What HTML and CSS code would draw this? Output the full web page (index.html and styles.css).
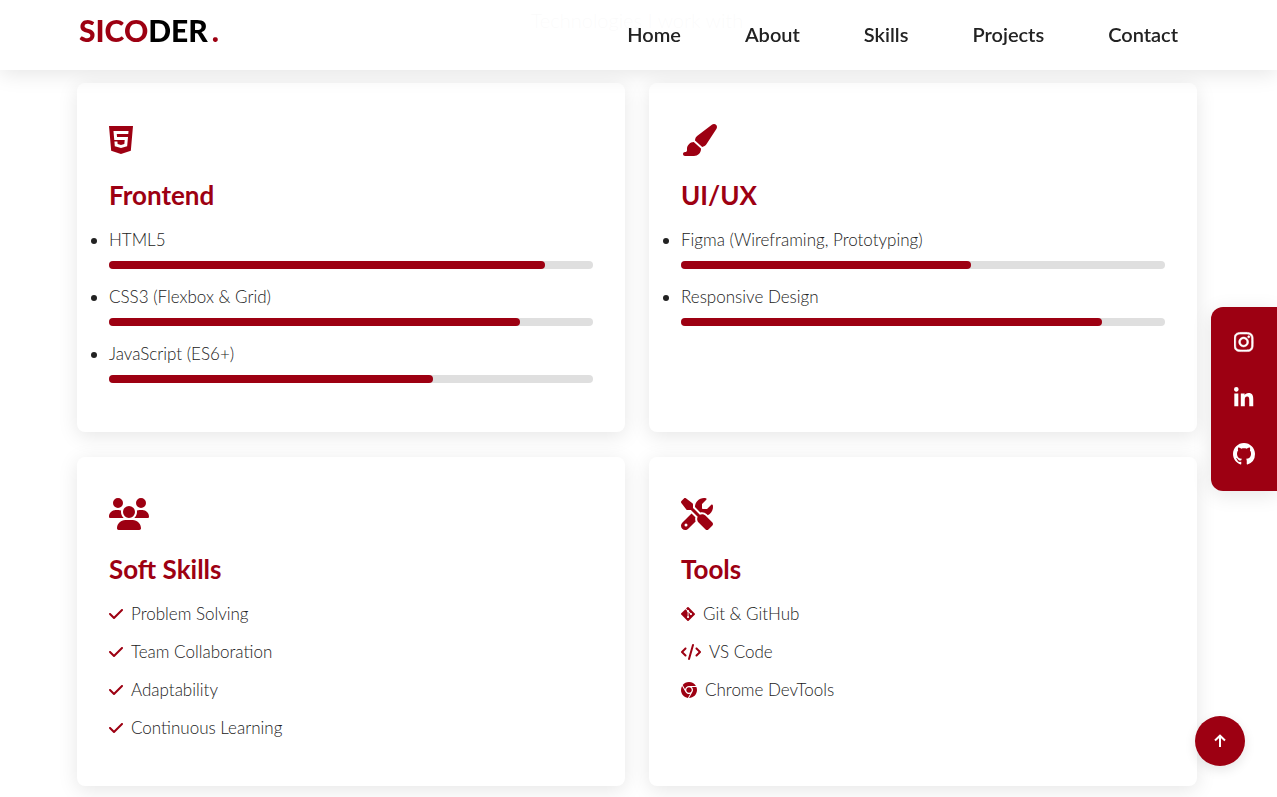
FILE: index.html
```html
<!DOCTYPE html>
<html lang="en">

<head>
    <meta charset="UTF-8">
    <meta name="viewport" content="width=device-width, initial-scale=1.0">
    <title>Sicoder</title>
    <link rel="stylesheet" href="styles.css">
</head>

<body>
    <header class="header">
        <a href="#" class="logo"><span class="logo-red">SICO</span>DER<span class="logo-dot">.</span></a>
        <nav class="navbar">
            <a href="#home">Home</a>
            <a href="#about">About</a>
            <a href="#skills">Skills</a>
            <a href="#projects">Projects</a>
            <a href="#contact">Contact</a>
        </nav>
    </header>

    <section class="skills" id="skills">
        <p class="subtitle">Technologies I work with</p>

        <div class="skills-grid">
            <div class="card">
                <svg class="card-icon" viewBox="0 0 384 512"><path d="M0 32l34.9 395.8L191.5 480l157.6-52.2L384 32H0zm308.2 127.9H124.4l4.1 49.4h175.6l-13.6 148.4-97.9 27v.3h-1.1l-98.7-27.3-6-75.8h47.7L138 320l53.5 14.5 53.7-14.5 6-62.2H84.3L71.5 112.2h241.1l-4.4 47.7z"/></svg>
                <h3>Frontend</h3>
                <ul class="bars">
                    <li>HTML5
                        <div class="bar"><div class="fill" style="width: 90%"></div></div>
                    </li>
                    <li>CSS3 (Flexbox &amp; Grid)
                        <div class="bar"><div class="fill" style="width: 85%"></div></div>
                    </li>
                    <li>JavaScript (ES6+)
                        <div class="bar"><div class="fill" style="width: 67%"></div></div>
                    </li>
                </ul>
            </div>

            <div class="card">
                <svg class="card-icon" viewBox="0 0 576 512"><path d="M339.3 367.1c27.3-3.9 51.9-19.4 67.2-42.9L568.2 74.1c12.6-19.5 9.4-45.3-7.6-61.2S517.7-4.4 499.1 9.6L262.4 187.2c-24 18-38.2 46.1-38.4 76.1L339.3 367.1zm-19.6 25.4l-116-104.4C143.9 290.3 96 339.6 96 400c0 3.9 .2 7.8 .6 11.6C98.4 429.1 86.4 448 68.8 448H64c-17.7 0-32 14.3-32 32s14.3 32 32 32H208c61.9 0 112-50.1 112-112c0-2.5-.1-5-.2-7.5z"/></svg>
                <h3>UI/UX</h3>
                <ul class="bars">
                    <li>Figma (Wireframing, Prototyping)
                        <div class="bar"><div class="fill" style="width: 60%"></div></div>
                    </li>
                    <li>Responsive Design
                        <div class="bar"><div class="fill" style="width: 87%"></div></div>
                    </li>
                </ul>
            </div>

            <div class="card">
                <svg class="card-icon" viewBox="0 0 640 512"><path d="M144 0a80 80 0 1 1 0 160A80 80 0 1 1 144 0zM512 0a80 80 0 1 1 0 160A80 80 0 1 1 512 0zM0 298.7C0 239.8 47.8 192 106.7 192h42.7c15.9 0 31 3.5 44.6 9.7c-1.3 7.2-1.9 14.7-1.9 22.3c0 38.2 16.8 72.5 43.3 96c-.2 0-.4 0-.7 0H21.3C9.6 320 0 310.4 0 298.7zM405.3 320c-.2 0-.4 0-.7 0c26.6-23.5 43.3-57.8 43.3-96c0-7.6-.7-15-1.9-22.3c13.6-6.3 28.7-9.7 44.6-9.7h42.7C592.2 192 640 239.8 640 298.7c0 11.8-9.6 21.3-21.3 21.3H405.3zM224 224a96 96 0 1 1 192 0 96 96 0 1 1 -192 0zM128 485.3C128 411.7 187.7 352 261.3 352H378.7C452.3 352 512 411.7 512 485.3c0 14.7-11.9 26.7-26.7 26.7H154.7c-14.7 0-26.7-11.9-26.7-26.7z"/></svg>
                <h3>Soft Skills</h3>
                <ul class="list">
                    <li><svg viewBox="0 0 448 512"><path d="M438.6 105.4c12.5 12.5 12.5 32.8 0 45.3l-256 256c-12.5 12.5-32.8 12.5-45.3 0l-128-128c-12.5-12.5-12.5-32.8 0-45.3s32.8-12.5 45.3 0L160 338.7 393.4 105.4c12.5-12.5 32.8-12.5 45.3 0z"/></svg>Problem Solving</li>
                    <li><svg viewBox="0 0 448 512"><path d="M438.6 105.4c12.5 12.5 12.5 32.8 0 45.3l-256 256c-12.5 12.5-32.8 12.5-45.3 0l-128-128c-12.5-12.5-12.5-32.8 0-45.3s32.8-12.5 45.3 0L160 338.7 393.4 105.4c12.5-12.5 32.8-12.5 45.3 0z"/></svg>Team Collaboration</li>
                    <li><svg viewBox="0 0 448 512"><path d="M438.6 105.4c12.5 12.5 12.5 32.8 0 45.3l-256 256c-12.5 12.5-32.8 12.5-45.3 0l-128-128c-12.5-12.5-12.5-32.8 0-45.3s32.8-12.5 45.3 0L160 338.7 393.4 105.4c12.5-12.5 32.8-12.5 45.3 0z"/></svg>Adaptability</li>
                    <li><svg viewBox="0 0 448 512"><path d="M438.6 105.4c12.5 12.5 12.5 32.8 0 45.3l-256 256c-12.5 12.5-32.8 12.5-45.3 0l-128-128c-12.5-12.5-12.5-32.8 0-45.3s32.8-12.5 45.3 0L160 338.7 393.4 105.4c12.5-12.5 32.8-12.5 45.3 0z"/></svg>Continuous Learning</li>
                </ul>
            </div>

            <div class="card">
                <svg class="card-icon" viewBox="0 0 512 512"><path fill-rule="evenodd" d="M78.6 5C69.1-2.4 55.6-1.5 47 7L7 47c-8.5 8.5-9.4 22-2.1 31.6l80 104c4.5 5.9 11.6 9.4 19 9.4h54.1l109 109c-14.7 29-10 65.4 14.3 89.6l112 112c12.5 12.5 32.8 12.5 45.3 0l64-64c12.5-12.5 12.5-32.8 0-45.3l-112-112c-24.2-24.2-60.6-29-89.6-14.3l-109-109V104c0-7.5-3.5-14.5-9.4-19L78.6 5zM19.9 396.1C7.2 408.8 0 426.1 0 444.1C0 481.6 30.4 512 67.9 512c18 0 35.3-7.2 48-19.9L233.7 374.3c-7.8-20.9-9-43.6-3.6-65.1l-61.7-61.7L19.9 396.1zM512 144c0-10.5-1.1-20.7-3.2-30.5c-2.4-11.2-16.1-14.1-24.2-6l-63.9 63.9c-3 3-7.1 4.7-11.3 4.7H352c-8.8 0-16-7.2-16-16V102.6c0-4.2 1.7-8.3 4.7-11.3l63.9-63.9c8.1-8.1 5.2-21.8-6-24.2C388.7 1.1 378.5 0 368 0C288.5 0 224 64.5 224 144l0 .8 85.3 85.3c36-9.1 75.8 .5 104 28.7L429 274.5c49-23 83-72.8 83-130.5zM56 432a24 24 0 1 1 48 0 24 24 0 1 1 -48 0z"/></svg>
                <h3>Tools</h3>
                <ul class="list">
                    <li><svg viewBox="0 0 448 512"><path d="M439.55 236.05L244 40.45a28.87 28.87 0 0 0-40.81 0l-40.66 40.63 51.52 51.52c27.06-9.14 52.68 16.77 43.39 43.68l49.66 49.66c34.23-11.8 61.18 31 35.47 56.69-26.49 26.49-70.21-2.87-56-37.34L240.22 199v121.85c25.3 12.54 22.26 41.85 9.08 55a34.34 34.34 0 0 1-48.55 0c-17.57-17.6-11.07-46.91 11.25-56v-123c-20.8-8.51-24.6-30.74-18.64-45L142.57 101 8.45 235.14a28.86 28.86 0 0 0 0 40.81l195.61 195.6a28.86 28.86 0 0 0 40.8 0l194.69-194.69a28.86 28.86 0 0 0 0-40.81z"/></svg>Git &amp; GitHub</li>
                    <li><svg viewBox="0 0 640 512"><path d="M392.8 1.2c-17-4.9-34.7 5-39.6 22l-128 448c-4.9 17 5 34.7 22 39.6s34.7-5 39.6-22l128-448c4.9-17-5-34.7-22-39.6zm80.6 120.1c-12.5 12.5-12.5 32.8 0 45.3L562.7 256l-89.4 89.4c-12.5 12.5-12.5 32.8 0 45.3s32.8 12.5 45.3 0l112-112c12.5-12.5 12.5-32.8 0-45.3l-112-112c-12.5-12.5-32.8-12.5-45.3 0zm-306.7 0c-12.5-12.5-32.8-12.5-45.3 0l-112 112c-12.5 12.5-12.5 32.8 0 45.3l112 112c12.5 12.5 32.8 12.5 45.3 0s12.5-32.8 0-45.3L77.3 256l89.4-89.4c12.5-12.5 12.5-32.8 0-45.3z"/></svg>VS Code</li>
                    <li><svg viewBox="0 0 512 512"><path d="M0 256C0 209.4 12.47 165.6 34.27 127.1L144.1 318.3C166 357.5 207.9 384 256 384C270.3 384 283.1 381.7 296.8 377.4L220.5 509.6C95.9 492.3 0 385.3 0 256zM365.1 321.6C377.4 302.4 384 279.1 384 256C384 217.8 367.2 183.5 340.7 160H493.4C505.4 189.6 512 222.1 512 256C512 397.4 397.4 511.1 256 512L365.1 321.6zM477.8 128H256C193.1 128 142.3 172.1 130.5 230.7L54.19 98.47C101 38.53 174 0 256 0C350.8 0 433.5 51.48 477.8 128zM168 256C168 207.4 207.4 168 256 168C304.6 168 344 207.4 344 256C344 304.6 304.6 344 256 344C207.4 344 168 304.6 168 256z"/></svg>Chrome DevTools</li>
                </ul>
            </div>
        </div>
    </section>

    <div class="socials">
        <a href="#" aria-label="Instagram"><svg class="instagram" viewBox="0 0 448 512"><path d="M224.1 141c-63.6 0-114.9 51.3-114.9 114.9s51.3 114.9 114.9 114.9S339 319.5 339 255.9 287.7 141 224.1 141zm0 189.6c-41.1 0-74.7-33.5-74.7-74.7s33.5-74.7 74.7-74.7 74.7 33.5 74.7 74.7-33.6 74.7-74.7 74.7zm146.4-194.3c0 14.9-12 26.8-26.8 26.8-14.9 0-26.8-12-26.8-26.8s12-26.8 26.8-26.8 26.8 12 26.8 26.8zm76.1 27.2c-1.7-35.9-9.9-67.7-36.2-93.9-26.2-26.2-58-34.4-93.9-36.2-37-2.1-147.9-2.1-184.9 0-35.8 1.7-67.6 9.9-93.9 36.1s-34.4 58-36.2 93.9c-2.1 37-2.1 147.9 0 184.9 1.7 35.9 9.9 67.7 36.2 93.9s58 34.4 93.9 36.2c37 2.1 147.9 2.1 184.9 0 35.9-1.7 67.7-9.9 93.9-36.2 26.2-26.2 34.4-58 36.2-93.9 2.1-37 2.1-147.8 0-184.8zM398.8 388c-7.8 19.6-22.9 34.7-42.6 42.6-29.5 11.7-99.5 9-132.1 9s-102.7 2.6-132.1-9c-19.6-7.8-34.7-22.9-42.6-42.6-11.7-29.5-9-99.5-9-132.1s-2.6-102.7 9-132.1c7.8-19.6 22.9-34.7 42.6-42.6 29.5-11.7 99.5-9 132.1-9s102.7-2.6 132.1 9c19.6 7.8 34.7 22.9 42.6 42.6 11.7 29.5 9 99.5 9 132.1s2.7 102.7-9 132.1z"/></svg></a>
        <a href="#" aria-label="LinkedIn"><svg viewBox="0 0 448 512"><path d="M100.28 448H7.4V148.9h92.88zM53.79 108.1C24.09 108.1 0 83.5 0 53.8a53.79 53.79 0 0 1 107.58 0c0 29.7-24.1 54.3-53.79 54.3zM447.9 448h-92.68V302.4c0-34.7-.7-79.2-48.29-79.2-48.29 0-55.69 37.7-55.69 76.7V448h-92.78V148.9h89.08v40.8h1.3c12.4-23.5 42.69-48.3 87.88-48.3 94 0 111.28 61.9 111.28 142.3V448z"/></svg></a>
        <a href="#" aria-label="GitHub"><svg viewBox="0 0 16 16"><path d="M8 0C3.58 0 0 3.58 0 8c0 3.54 2.29 6.53 5.47 7.59.4.07.55-.17.55-.38 0-.19-.01-.82-.01-1.49-2.01.37-2.53-.49-2.69-.94-.09-.23-.48-.94-.82-1.13-.28-.15-.68-.52-.01-.53.63-.01 1.08.58 1.23.82.72 1.21 1.87.87 2.33.66.07-.52.28-.87.51-1.07-1.78-.2-3.64-.89-3.64-3.95 0-.87.31-1.59.82-2.15-.08-.2-.36-1.02.08-2.12 0 0 .67-.21 2.2.82.64-.18 1.32-.27 2-.27s1.36.09 2 .27c1.53-1.04 2.2-.82 2.2-.82.44 1.1.16 1.92.08 2.12.51.56.82 1.27.82 2.15 0 3.07-1.87 3.75-3.65 3.95.29.25.54.73.54 1.48 0 1.07-.01 1.93-.01 2.2 0 .21.15.46.55.38A8.01 8.01 0 0 0 16 8c0-4.42-3.58-8-8-8z"/></svg></a>
    </div>

    <button class="to-top" aria-label="Back to top"><svg viewBox="0 0 12 14"><path d="M6 13V2M1 6.5L6 1.7l5 4.8"/></svg></button>
</body>

</html>
```

FILE: styles.css
```css
* {
    margin: 0;
    padding: 0;
    box-sizing: border-box;
}

body {
    font-family: Lato, "Open Sans", sans-serif;
    background-color: #fff;
    color: #222;
}

a {
    text-decoration: none;
}

.header {
    position: fixed;
    top: 0;
    left: 0;
    width: 100%;
    height: 70px;
    padding: 0 99px 2px 79px;
    display: flex;
    justify-content: space-between;
    align-items: center;
    background-color: rgba(255, 255, 255, 0.98);
    box-shadow: 0 4px 20px rgba(0, 0, 0, 0.1);
    z-index: 10;
}

.logo {
    font-size: 30px;
    font-weight: 900;
    line-height: 40px;
    padding-bottom: 8px;
    color: #000;
}

.logo-red,
.logo-dot {
    color: #9d0012;
}

.logo-dot {
    margin-left: 4px;
}

.navbar {
    display: flex;
    gap: 64px;
}

.navbar a {
    font-size: 20px;
    line-height: 24px;
    font-weight: 600;
    color: #222;
}

.skills {
    padding: 8px 80px 12px 77px;
}

.subtitle {
    height: 75px;
    font-size: 20px;
    font-weight: 300;
    text-align: center;
}

.skills-grid {
    display: grid;
    grid-template-columns: repeat(2, 1fr);
    gap: 25px 24px;
}

.card {
    padding: 41px 32px 33px;
    background-color: #fff;
    border-radius: 8px;
    box-shadow: 0 4px 20px rgba(0, 0, 0, 0.1);
}

.card svg {
    fill: #9d0012;
}

.card-icon {
    display: block;
    height: 32px;
}

.card h3 {
    margin: 20px 0 13px;
    font-size: 26px;
    line-height: 38px;
    color: #9d0012;
}

.card li {
    font-size: 17px;
    font-weight: 300;
    line-height: 25px;
}

.bars li {
    margin-bottom: 15px;
}

.bar {
    height: 8px;
    margin-top: 9px;
    background-color: #dfdfdf;
    border-radius: 4px;
}

.fill {
    height: 8px;
    background-color: #9d0012;
    border-radius: 4px;
}

.bars {
    padding-bottom: 1px;
}

.list {
    list-style: none;
}

.list li {
    display: flex;
    align-items: center;
    gap: 8px;
    margin-bottom: 13px;
}

.list svg {
    height: 16px;
}

.socials {
    position: fixed;
    top: 50%;
    right: 0;
    transform: translateY(-50%);
    width: 66px;
    padding: 7px 0 9px;
    background-color: #9d0012;
    border-radius: 12px 0 0 12px;
    box-shadow: 0 4px 20px rgba(0, 0, 0, 0.1);
}

.socials a {
    display: flex;
    height: 56px;
    align-items: center;
    justify-content: center;
}

.socials svg {
    height: 22px;
    fill: #fff;
}

.socials .instagram {
    stroke: #fff;
    stroke-width: 12;
}

.to-top {
    position: fixed;
    right: 32px;
    bottom: 31px;
    width: 50px;
    height: 50px;
    display: flex;
    align-items: center;
    justify-content: center;
    border: none;
    border-radius: 50%;
    background-color: #9d0012;
    box-shadow: 0 4px 12px rgba(0, 0, 0, 0.1);
}

.to-top svg {
    height: 14px;
    fill: none;
    stroke: #fff;
    stroke-width: 2;
}
```
